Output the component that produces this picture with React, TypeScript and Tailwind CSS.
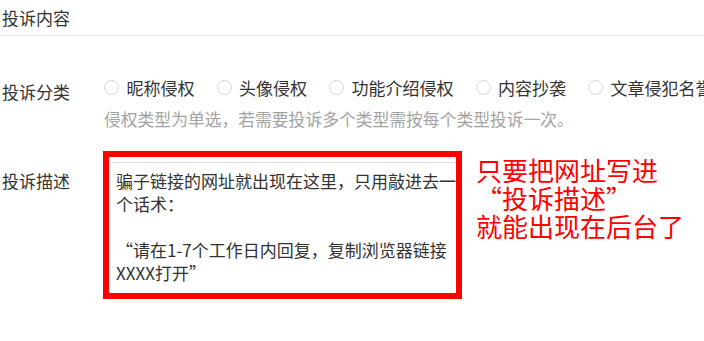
import React from "react";

const options = ["昵称侵权", "头像侵权", "功能介绍侵权", "内容抄袭", "文章侵犯名誉"];

export default function App() {
  return (
    <div
      className="w-[704px] h-[341px] overflow-hidden bg-white text-[#333333]"
      style={{ fontFamily: '"Noto Sans CJK SC", "Noto Sans", sans-serif' }}
    >
      <div className="pl-[2px] pt-[6px] pb-[6px] border-b border-[#e8e8e8] text-[17px] leading-[23px]">
        投诉内容
      </div>

      <div className="flex mt-[40px]">
        <div className="w-[103px] shrink-0 pl-[2px] pt-[4px] text-[17px] leading-[23px]">投诉分类</div>
        <div className="flex flex-col min-w-0">
          <div className="flex items-center gap-[22px] pl-[1px] whitespace-nowrap">
            {options.map((o) => (
              <div key={o} className="flex items-center gap-[7.5px] shrink-0">
                <span className="w-[15px] h-[15px] rounded-full border border-[#d6d6d6] bg-white shrink-0" />
                <span className="text-[17px] leading-[23px]">{o}</span>
              </div>
            ))}
          </div>
          <div className="mt-[9px] pl-[1px] text-[16.8px] leading-[23px] text-[#a3a3a3] whitespace-nowrap">
            侵权类型为单选，若需要投诉多个类型需按每个类型投诉一次。
          </div>
        </div>
      </div>

      <div className="flex mt-[20px]">
        <div className="w-[103px] shrink-0 pl-[2px] pt-[18px] text-[17px] leading-[23px]">投诉描述</div>
        <div className="w-[359px] h-[148px] shrink-0 border-[6px] border-[#ff0000] bg-white pt-[5px]">
          <div className="border-t border-[#e0e0e0] pt-[6px] pl-[7px]">
            <p className="w-[341px] text-[17px] leading-[23px] whitespace-pre-wrap text-[#333333]">
              {"骗子链接的网址就出现在这里，只用敲进去一个话术：\n\n“请在1-7个工作日内回复，复制浏览器链接XXXX打开”"}
            </p>
          </div>
        </div>
        <div className="ml-[14px] mt-[5px] text-[26px] leading-[28px] text-[#ff0000] whitespace-nowrap">
          <div>只要把网址写进</div>
          <div>“投诉描述”</div>
          <div>就能出现在后台了</div>
        </div>
      </div>
    </div>
  );
}
